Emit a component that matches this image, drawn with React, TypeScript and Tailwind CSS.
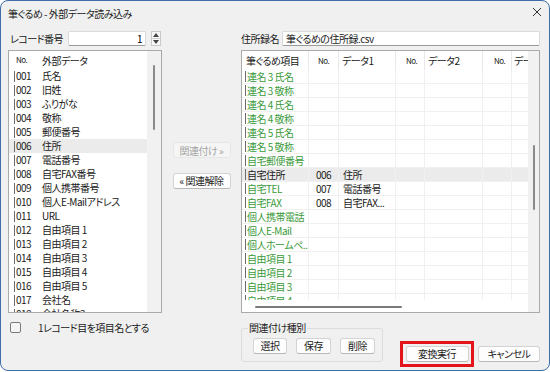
import React from "react";

const font = "font-['Noto_Sans_CJK_JP','Noto_Sans',sans-serif] [font-feature-settings:'palt'] tracking-[-0.5px]";

const leftRows: [string, string][] = [
  ["001", "氏名"],
  ["002", "旧姓"],
  ["003", "ふりがな"],
  ["004", "敬称"],
  ["005", "郵便番号"],
  ["006", "住所"],
  ["007", "電話番号"],
  ["008", "自宅FAX番号"],
  ["009", "個人携帯番号"],
  ["010", "個人E-Mailアドレス"],
  ["011", "URL"],
  ["012", "自由項目 1"],
  ["013", "自由項目 2"],
  ["014", "自由項目 3"],
  ["015", "自由項目 4"],
  ["016", "自由項目 5"],
  ["017", "会社名"],
  ["018", "会社名称2"],
];

type RightRow = { name: string; no?: string; data?: string; sel?: boolean };

const rightRows: RightRow[] = [
  { name: "連名 3 氏名" },
  { name: "連名 3 敬称" },
  { name: "連名 4 氏名" },
  { name: "連名 4 敬称" },
  { name: "連名 5 氏名" },
  { name: "連名 5 敬称" },
  { name: "自宅郵便番号" },
  { name: "自宅住所", no: "006", data: "住所", sel: true },
  { name: "自宅TEL", no: "007", data: "電話番号" },
  { name: "自宅FAX", no: "008", data: "自宅FAX..." },
  { name: "個人携帯電話" },
  { name: "個人E-Mail" },
  { name: "個人ホームペ..." },
  { name: "自由項目 1" },
  { name: "自由項目 2" },
  { name: "自由項目 3" },
  { name: "自由項目 4" },
];

function Btn({ children, className }: { children: React.ReactNode; className: string }) {
  return (
    <div
      className={`h-[16px] flex items-center justify-center rounded-[3px] border border-[#d3d3d3] border-b-[#b9b9b9] bg-[#fdfdfd] text-[10px] leading-[14px] text-[#1a1a1a] ${className}`}
    >
      {children}
    </div>
  );
}

function LeftList() {
  return (
    <div className="mt-[4px] h-[263px] border border-[#a9a9a9] bg-white flex overflow-hidden">
      <div className="w-[138px] flex flex-col overflow-hidden">
        <div className="h-[18px] shrink-0 flex items-center text-[10px] text-[#1a1a1a]">
          <span className="w-[33px] pl-[7px] text-[8px]">No.</span>
          <span>外部データ</span>
        </div>
        {leftRows.map(([no, name]) => (
          <div
            key={no}
            className={`h-[14px] shrink-0 flex items-center text-[10px] leading-[14px] text-[#1a1a1a] ${no === "006" ? "bg-[#ebebeb]" : ""}`}
          >
            <span className="ml-[5px] shrink-0 w-px h-[11px] bg-[#6b6b6b]" />
            <span className="ml-[1px] shrink-0 w-[26px]">{no}</span>
            <span className="whitespace-nowrap">{name}</span>
          </div>
        ))}
      </div>
      <div className="relative flex-1 bg-[#f1f1f1]">
        <div className="absolute left-[6px] top-[14px] w-[2px] h-[65px] rounded-full bg-[#8a8a8a]" />
      </div>
    </div>
  );
}

const cols = "grid grid-cols-[67px_30px_57px_29px_58px_29px_40px]";

function RightList() {
  return (
    <div className="mt-[4px] h-[263px] border border-[#a9a9a9] bg-white flex overflow-hidden">
      <div className="w-[286px] flex flex-col overflow-hidden">
        <div className={`${cols} h-[19px] shrink-0 text-[10px] text-[#1a1a1a]`}>
          <div className="flex items-center pl-[4px] border-r border-[#e8e8e8]">筆ぐるめ項目</div>
          <div className="flex items-center pl-[9px] text-[8px] border-r border-[#e8e8e8]">No.</div>
          <div className="flex items-center pl-[3px] border-r border-[#e8e8e8]">データ1</div>
          <div className="flex items-center pl-[10px] text-[8px] border-r border-[#e8e8e8]">No.</div>
          <div className="flex items-center pl-[3px] border-r border-[#e8e8e8]">データ2</div>
          <div className="flex items-center pl-[11px] text-[8px] border-r border-[#e8e8e8]">No.</div>
          <div className="flex items-center pl-[2px] whitespace-nowrap overflow-hidden">データ3</div>
        </div>
        <div className="h-[230px] overflow-hidden">
          {rightRows.map((r) => (
            <div
              key={r.name}
              className={`${cols} h-[14px] text-[10px] leading-[13px] ${r.sel ? "bg-[#ebebeb] text-[#1a1a1a]" : "text-[#3a9a3a]"}`}
            >
              <div className="flex items-center border-r border-b border-[#f0f0f0] whitespace-nowrap overflow-hidden">
                <span className="ml-[3px] shrink-0 w-px h-[11px] bg-[#6b6b6b]" />
                <span className="ml-[1px]">{r.name}</span>
              </div>
              <div className="flex items-center pl-[7px] border-r border-b border-[#f0f0f0] text-[#1a1a1a]">{r.no}</div>
              <div className="flex items-center pl-[4px] border-r border-b border-[#f0f0f0] text-[#1a1a1a] whitespace-nowrap">{r.data}</div>
              <div className="border-r border-b border-[#f0f0f0]" />
              <div className="border-r border-b border-[#f0f0f0]" />
              <div className="border-r border-b border-[#f0f0f0]" />
              <div className="border-b border-[#f0f0f0]" />
            </div>
          ))}
        </div>
        <div className="flex-1 relative">
          <div className="absolute left-[13px] top-[6px] w-[147px] h-[2px] rounded-full bg-[#7a7a7a]" />
        </div>
      </div>
      <div className="relative flex-1 bg-[#f1f1f1]">
        <div className="absolute left-[5px] top-[94px] w-[2px] h-[65px] rounded-full bg-[#8a8a8a]" />
      </div>
    </div>
  );
}

export default function App() {
  return (
    <div className={`w-[550px] h-[372px] bg-white ${font}`}>
      <div className="w-[550px] h-[371px] border border-[#3d6ea6] rounded-[8px] bg-[#f0f0f0] flex flex-col overflow-hidden">
        <div className="h-[24px] shrink-0 flex items-center justify-between pl-[7px] pr-[7px]">
          <span className="text-[10px] text-[#1a1a1a]">筆ぐるめ - 外部データ読み込み</span>
          <svg width="10" height="10" viewBox="0 0 10 10" className="mt-[-2px]">
            <path d="M1 1L9 9M9 1L1 9" stroke="#333" strokeWidth="1" />
          </svg>
        </div>

        <div className="mt-[6px] pl-[7px] pr-[9px] grid grid-cols-[154px_79px_299px]">
          {/* left column */}
          <div className="flex flex-col">
            <div className="h-[15px] flex items-center">
              <span className="w-[60px] shrink-0 pl-[2px] text-[10px] text-[#1a1a1a] whitespace-nowrap">レコード番号</span>
              <div className="w-[78px] h-[15px] bg-white border border-[#dadada] border-b-[#9a9a9a] rounded-[2px] flex items-center justify-end pr-[3px] text-[10px]">
                1
              </div>
              <div className="ml-[5px] w-[10px] h-[15px] border border-[#c9c9c9] bg-[#f7f7f7] flex flex-col items-center justify-around">
                <svg width="6" height="4" viewBox="0 0 6 4"><path d="M0 4L3 0L6 4Z" fill="#444" /></svg>
                <div className="w-full h-px bg-[#d0d0d0]" />
                <svg width="6" height="4" viewBox="0 0 6 4"><path d="M0 0L3 4L6 0Z" fill="#444" /></svg>
              </div>
            </div>
            <LeftList />
            <div className="mt-[8px] flex items-center h-[12px]">
              <span className="ml-[2px] w-[11px] h-[11px] rounded-[2px] border border-[#7a7a7a] bg-[#f5f5f5]" />
              <span className="ml-[17px] text-[10px] text-[#1a1a1a]">1レコード目を項目名とする</span>
            </div>
          </div>

          {/* middle column */}
          <div className="flex flex-col items-center pt-[111px] gap-[15px]">
            <div className="w-[58px] h-[16px] flex items-center justify-center rounded-[3px] border border-[#e6e6e6] bg-[#f5f5f5] text-[10px] text-[#a3a3a3]">
              関連付け »
            </div>
            <Btn className="w-[58px]">« 関連解除</Btn>
          </div>

          {/* right column */}
          <div className="flex flex-col">
            <div className="h-[15px] flex items-center">
              <span className="w-[41px] text-[10px] text-[#1a1a1a]">住所録名</span>
              <div className="flex-1 h-[15px] bg-white border border-[#dadada] border-b-[#9a9a9a] rounded-[2px] flex items-center pl-[3px] text-[10px] text-[#1a1a1a]">
                筆ぐるめの住所録.csv
              </div>
            </div>
            <RightList />
            <div className="flex">
              <div className="relative mt-[15px] w-[142px] h-[34px] border border-[#dcdcdc] rounded-[3px]">
                <span className="absolute -top-[7px] left-[6px] px-[1px] bg-[#f0f0f0] text-[10px] leading-[12px] text-[#1a1a1a]">
                  関連付け種別
                </span>
                <div className="pt-[9px] pl-[11px] flex gap-[9px]">
                  <Btn className="w-[34px]">選択</Btn>
                  <Btn className="w-[35px]">保存</Btn>
                  <Btn className="w-[35px]">削除</Btn>
                </div>
              </div>
              <div className="ml-[17px] mt-[28px] w-[74px] h-[26px] border-[3px] border-[#e3141c] flex items-center justify-center">
                <Btn className="w-[63px]">変換実行</Btn>
              </div>
              <Btn className="ml-[4px] mt-[33px] w-[62px]">キャンセル</Btn>
            </div>
          </div>
        </div>
      </div>
    </div>
  );
}
